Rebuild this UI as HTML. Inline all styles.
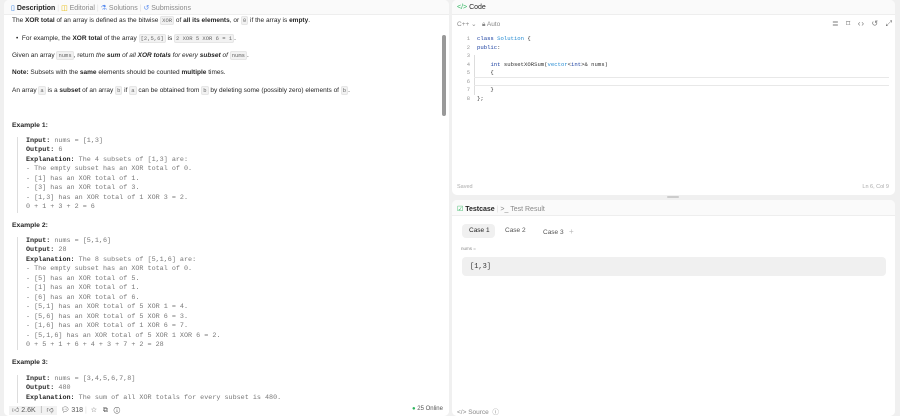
<!DOCTYPE html>
<html><head><meta charset="utf-8"><style>
*{margin:0;padding:0;box-sizing:border-box}
body{width:900px;height:416px;background:#f0f0f0;font-family:"Liberation Sans",sans-serif;font-size:6.5px;color:#262626;position:relative;overflow:hidden}
.abs{position:absolute;white-space:nowrap}
.panel{position:absolute;background:#fff;border-radius:5px;overflow:hidden}
.hdr{position:absolute;left:0;right:0;top:0;height:15px;background:#fafafa;border-bottom:1px solid #eee}
code,.m{font-family:"Liberation Mono",monospace}
.ic{background:#f2f2f2;border:1px solid #e6e6e6;border-radius:2px;padding:0 1px;font-size:5.5px;color:#666;font-family:"Liberation Mono",monospace}
.pre{position:absolute;left:13px;border-left:1px solid #ddd;padding-left:8px;font-family:"Liberation Mono",monospace;font-size:6.75px;line-height:9.45px;color:#777;white-space:pre}
.pre b{color:#262626}
.ex{font-weight:bold;font-size:6.8px}
.ln{position:absolute;left:10px;width:8px;text-align:right;color:#999;font-family:"Liberation Mono",monospace;font-size:5.5px}
.cl{position:absolute;left:25px;font-family:"Liberation Mono",monospace;font-size:5.6px;color:#333;white-space:pre}
.kw{color:#1a3fa0}.ty{color:#268bd2}
</style></head><body>
<div class="panel" style="left:4px;top:0;width:445px;height:416px">
 <div class="hdr"></div>
 <div class="abs" style="left:7px;top:4px;font-size:7px"><span style="color:#2d7be0">▯</span> <b>Description</b> <span style="color:#ddd">|</span> <span style="color:#e6b800">◫</span> <span style="color:#888">Editorial</span> <span style="color:#ddd">|</span> <span style="color:#5b8def">⚗</span> <span style="color:#888">Solutions</span> <span style="color:#ddd">|</span> <span style="color:#5b8def">↺</span> <span style="color:#888">Submissions</span></div>
 <div class="abs" style="left:8px;top:17px">The <b>XOR total</b> of an array is defined as the bitwise <span class="ic">XOR</span> of <b>all its elements</b>, or <span class="ic">0</span> if the array is <b>empty</b>.</div>
 <div class="abs" style="left:12px;top:35px">•&nbsp; For example, the <b>XOR total</b> of the array <span class="ic">[2,5,6]</span> is <span class="ic">2 XOR 5 XOR 6 = 1</span>.</div>
 <div class="abs" style="left:8px;top:52px">Given an array <span class="ic">nums</span>, return <i>the <b>sum</b> of all <b>XOR totals</b> for every <b>subset</b> of</i> <span class="ic">nums</span>.</div>
 <div class="abs" style="left:8px;top:69px"><b>Note:</b> Subsets with the <b>same</b> elements should be counted <b>multiple</b> times.</div>
 <div class="abs" style="left:8px;top:87px">An array <span class="ic">a</span> is a <b>subset</b> of an array <span class="ic">b</span> if <span class="ic">a</span> can be obtained from <span class="ic">b</span> by deleting some (possibly zero) elements of <span class="ic">b</span>.</div>
 <div class="abs ex" style="left:8px;top:122px">Example 1:</div>
 <div class="pre" style="top:137px"><b>Input:</b> nums = [1,3]
<b>Output:</b> 6
<b>Explanation:</b> The 4 subsets of [1,3] are:
- The empty subset has an XOR total of 0.
- [1] has an XOR total of 1.
- [3] has an XOR total of 3.
- [1,3] has an XOR total of 1 XOR 3 = 2.
0 + 1 + 3 + 2 = 6</div>
 <div class="abs ex" style="left:8px;top:222px">Example 2:</div>
 <div class="pre" style="top:237px"><b>Input:</b> nums = [5,1,6]
<b>Output:</b> 28
<b>Explanation:</b> The 8 subsets of [5,1,6] are:
- The empty subset has an XOR total of 0.
- [5] has an XOR total of 5.
- [1] has an XOR total of 1.
- [6] has an XOR total of 6.
- [5,1] has an XOR total of 5 XOR 1 = 4.
- [5,6] has an XOR total of 5 XOR 6 = 3.
- [1,6] has an XOR total of 1 XOR 6 = 7.
- [5,1,6] has an XOR total of 5 XOR 1 XOR 6 = 2.
0 + 5 + 1 + 6 + 4 + 3 + 7 + 2 = 28</div>
 <div class="abs ex" style="left:8px;top:359px">Example 3:</div>
 <div class="pre" style="top:375px"><b>Input:</b> nums = [3,4,5,6,7,8]
<b>Output:</b> 480
<b>Explanation:</b> The sum of all XOR totals for every subset is 480.</div>
 <div style="position:absolute;left:438px;top:35px;width:4px;height:81px;background:#999;border-radius:2px"></div>
 <div style="position:absolute;left:0;right:0;top:403px;height:13px;background:#fff"></div>
 <div class="abs" style="left:5px;top:405px;color:#555;font-size:7px"><span style="background:#f2f2f2;padding:1px 3px">👍︎ 2.6K ｜ 👎︎</span> &nbsp;💬︎ 318 <span style="color:#ddd">|</span>&nbsp; ☆ &nbsp; ⧉ &nbsp; ⓘ</div>
 <div class="abs" style="left:408px;top:406px;font-size:6px;color:#555"><span style="color:#2db55d">●</span> 25 Online</div>
</div>
<div class="panel" style="left:452px;top:0;width:443px;height:195px">
 <div class="hdr"></div>
 <div class="abs" style="left:5px;top:4px;font-size:7px"><span style="color:#2db55d">&lt;/&gt;</span> Code</div>
 <div class="abs" style="left:5px;top:20px;color:#888;font-size:6.5px">C++ ⌄ &nbsp; 🔒︎ Auto</div>
 <div class="abs" style="left:380px;top:19px;color:#777;font-size:8px;letter-spacing:1px">≣ &nbsp;⌑ &nbsp;‹› &nbsp;↺ &nbsp;⤢</div>
 <div style="position:absolute;left:22px;top:55px;width:1px;height:40px;background:#ddd"></div>
 <div style="position:absolute;left:22px;top:77px;right:6px;height:9px;border-top:1px solid #e8e8e8;border-bottom:1px solid #e8e8e8"></div>
 <div class="ln" style="top:35px">1</div><div class="cl" style="top:35px"><span class="kw">class</span> <span class="ty">Solution</span> {</div>
 <div class="ln" style="top:43.5px">2</div><div class="cl" style="top:43.5px"><span class="kw">public</span>:</div>
 <div class="ln" style="top:52px">3</div>
 <div class="ln" style="top:60.5px">4</div><div class="cl" style="top:60.5px">    <span class="kw">int</span> subsetXORSum(<span class="ty">vector</span>&lt;<span class="kw">int</span>&gt;&amp; nums)</div>
 <div class="ln" style="top:69px">5</div><div class="cl" style="top:69px">    {</div>
 <div class="ln" style="top:77.5px">6</div>
 <div class="ln" style="top:86px">7</div><div class="cl" style="top:86px">    }</div>
 <div class="ln" style="top:94.5px">8</div><div class="cl" style="top:94.5px">};</div>
 <div class="abs" style="left:5px;top:184px;color:#aaa;font-size:5.5px">Saved</div>
 <div class="abs" style="right:6px;top:184px;color:#aaa;font-size:5.5px">Ln 6, Col 9</div>
</div>
<div style="position:absolute;left:667px;top:196px;width:12px;height:2px;background:#ccc;border-radius:1px"></div>
<div class="panel" style="left:452px;top:200px;width:443px;height:216px">
 <div class="hdr" style="height:16px"></div>
 <div class="abs" style="left:5px;top:5px;font-size:7px"><span style="color:#2db55d">☑</span> <b>Testcase</b> <span style="color:#ddd">|</span> <span style="color:#888">&gt;_ Test Result</span></div>
 <div style="position:absolute;left:10px;top:24px;width:33px;height:14px;background:#f0f0f0;border-radius:4px"></div>
 <div class="abs" style="left:17px;top:27px;font-size:6.5px">Case 1</div>
 <div class="abs" style="left:53px;top:27px;font-size:6.5px;color:#555">Case 2</div>
 <div class="abs" style="left:91px;top:27px;font-size:6.5px;color:#555">Case 3 &nbsp;&nbsp;<span style="color:#bbb;font-size:8px">+</span></div>
 <div class="abs" style="left:9px;top:46px;font-size:4.5px;color:#888">nums =</div>
 <div style="position:absolute;left:10px;top:57px;width:424px;height:19px;background:#f0f0f0;border-radius:4px"></div>
 <div class="abs m" style="left:18px;top:63px;font-size:7px;color:#333">[1,3]</div>
 <div class="abs" style="left:5px;top:206px;color:#888;font-size:6.5px">&lt;/&gt; Source &nbsp;ⓘ</div>
</div>
</body></html>
